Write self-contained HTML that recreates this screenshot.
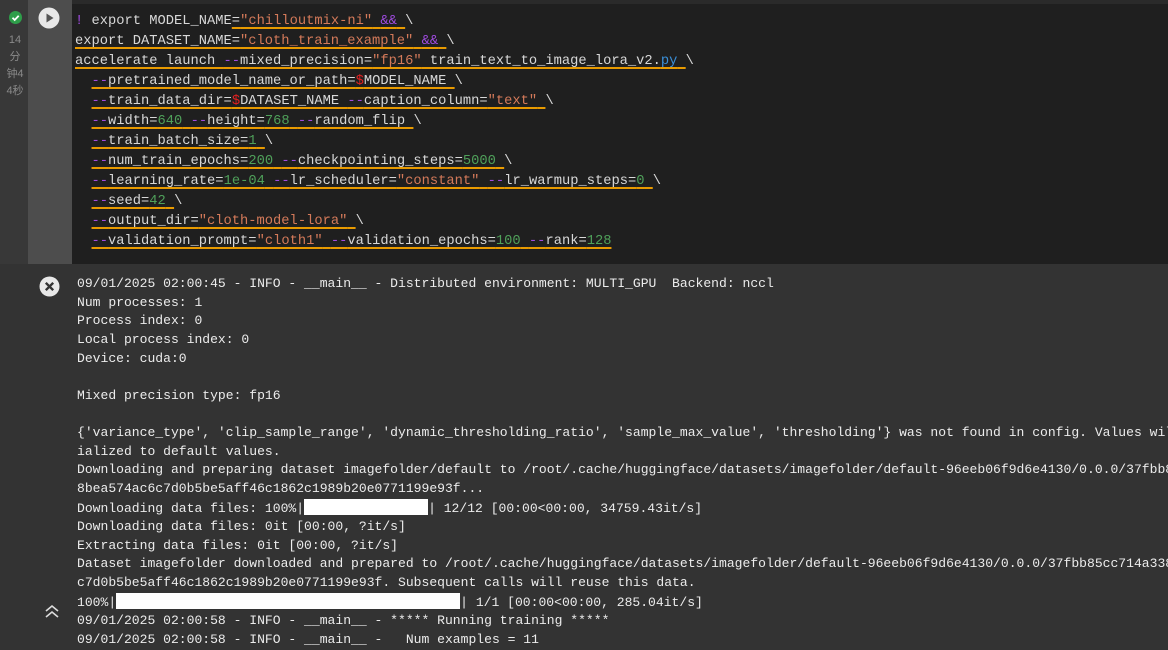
<!DOCTYPE html>
<html><head><meta charset="utf-8"><style>
body{margin:0;width:1168px;height:639px;overflow:hidden;background:#333;font-family:"Liberation Mono",monospace;}
#top{position:absolute;left:0;top:0;width:1168px;height:264px;background:#383838;}
#strip{position:absolute;left:28px;top:0;width:44px;height:264px;background:#4d4d4d;}
#code{position:absolute;left:72px;top:4px;width:1096px;height:260px;background:#1f1f1f;}
#topline{position:absolute;left:72px;top:0;width:1096px;height:4px;background:#2a2a2a;}
.cl{position:absolute;left:75px;font-size:13.75px;color:#d8d8d8;white-space:pre;line-height:20px;}
.u{text-decoration:underline #e89a00;text-decoration-thickness:2px;text-underline-offset:3px;}
.s{color:#d47a5a}.p{color:#a04be0}.n{color:#4fa05a}.d{color:#e02020}.b{color:#3a8fd8}
#out{position:absolute;left:77px;top:275px;font-size:13.05px;line-height:18.62px;color:#ececec;white-space:pre;}
.bar{display:inline-block;background:#fff;height:16px;vertical-align:-3px;}
.ic{position:absolute;}
.side{position:absolute;left:3px;color:#8a8a8a;font-family:"Liberation Sans","Noto Sans CJK SC",sans-serif;font-size:11px;line-height:17px;width:24px;text-align:center;}
</style></head><body>
<div id="top"></div><div id="strip"></div><div id="topline"></div><div id="code"></div>
<svg class="ic" style="left:9px;top:11px" width="13" height="13"><circle cx="6.5" cy="6.5" r="6.5" fill="#2e9e4a"/><path d="M3.5 6.8l2.2 2.2 4-4.2" stroke="#fff" stroke-width="1.8" fill="none"/></svg>
<div class="side" style="top:32px">14<br>分<br>钟4<br>4秒</div>
<svg class="ic" style="left:38px;top:7px" width="22" height="22"><circle cx="11" cy="11" r="10.5" fill="#e8e8e8"/><path d="M8.5 6.5v9l7-4.5z" fill="#555"/></svg>
<div class="cl" style="top:12px"><span class="p">!</span> export MODEL_NAME<span class="u">=<span class="s">"chilloutmix-ni"</span> <span class="p">&amp;&amp;</span> </span>\</div>
<div class="cl" style="top:32px"><span class="u">export DATASET_NAME=<span class="s">"cloth_train_example"</span> <span class="p">&amp;&amp;</span> </span>\</div>
<div class="cl" style="top:52px"><span class="u">accelerate launch <span class="p">--</span>mixed_precision=<span class="s">"fp16"</span> train_text_to_image_lora_v2.<span class="b">py</span> </span>\</div>
<div class="cl" style="top:72px">  <span class="u"><span class="p">--</span>pretrained_model_name_or_path=<span class="d">$</span>MODEL_NAME </span>\</div>
<div class="cl" style="top:92px">  <span class="u"><span class="p">--</span>train_data_dir=<span class="d">$</span>DATASET_NAME <span class="p">--</span>caption_column=<span class="s">"text"</span> </span>\</div>
<div class="cl" style="top:112px">  <span class="u"><span class="p">--</span>width=<span class="n">640</span> <span class="p">--</span>height=<span class="n">768</span> <span class="p">--</span>random_flip </span>\</div>
<div class="cl" style="top:132px">  <span class="u"><span class="p">--</span>train_batch_size=<span class="n">1</span> </span>\</div>
<div class="cl" style="top:152px">  <span class="u"><span class="p">--</span>num_train_epochs=<span class="n">200</span> <span class="p">--</span>checkpointing_steps=<span class="n">5000</span> </span>\</div>
<div class="cl" style="top:172px">  <span class="u"><span class="p">--</span>learning_rate=<span class="n">1e-04</span> <span class="p">--</span>lr_scheduler=<span class="s">"constant"</span> <span class="p">--</span>lr_warmup_steps=<span class="n">0</span> </span>\</div>
<div class="cl" style="top:192px">  <span class="u"><span class="p">--</span>seed=<span class="n">42</span> </span>\</div>
<div class="cl" style="top:212px">  <span class="u"><span class="p">--</span>output_dir=<span class="s">"cloth-model-lora"</span> </span>\</div>
<div class="cl" style="top:232px">  <span class="u"><span class="p">--</span>validation_prompt=<span class="s">"cloth1"</span> <span class="p">--</span>validation_epochs=<span class="n">100</span> <span class="p">--</span>rank=<span class="n">128</span></span></div>
<svg class="ic" style="left:39px;top:276px" width="21" height="21"><circle cx="10.5" cy="10.5" r="10" fill="#e8e8e8"/><path d="M6.8 6.8l7.4 7.4M14.2 6.8l-7.4 7.4" stroke="#333" stroke-width="2.4"/></svg>
<svg class="ic" style="left:44px;top:604px" width="16" height="14"><path d="M2 7l6-5 6 5M2 13l6-5 6 5" stroke="#ddd" stroke-width="1.6" fill="none"/></svg>
<div id="out">09/01/2025 02:00:45 - INFO - __main__ - Distributed environment: MULTI_GPU  Backend: nccl
Num processes: 1
Process index: 0
Local process index: 0
Device: cuda:0

Mixed precision type: fp16

{'variance_type', 'clip_sample_range', 'dynamic_thresholding_ratio', 'sample_max_value', 'thresholding'} was not found in config. Values will
ialized to default values.
Downloading and preparing dataset imagefolder/default to /root/.cache/huggingface/datasets/imagefolder/default-96eeb06f9d6e4130/0.0.0/37fbb85cc
8bea574ac6c7d0b5be5aff46c1862c1989b20e0771199e93f...
Downloading data files: 100%|<span class="bar" style="width:124px"></span>| 12/12 [00:00&lt;00:00, 34759.43it/s]
Downloading data files: 0it [00:00, ?it/s]
Extracting data files: 0it [00:00, ?it/s]
Dataset imagefolder downloaded and prepared to /root/.cache/huggingface/datasets/imagefolder/default-96eeb06f9d6e4130/0.0.0/37fbb85cc714a338
c7d0b5be5aff46c1862c1989b20e0771199e93f. Subsequent calls will reuse this data.
100%|<span class="bar" style="width:344px"></span>| 1/1 [00:00&lt;00:00, 285.04it/s]
09/01/2025 02:00:58 - INFO - __main__ - ***** Running training *****
09/01/2025 02:00:58 - INFO - __main__ -   Num examples = 11</div>
</body></html>
